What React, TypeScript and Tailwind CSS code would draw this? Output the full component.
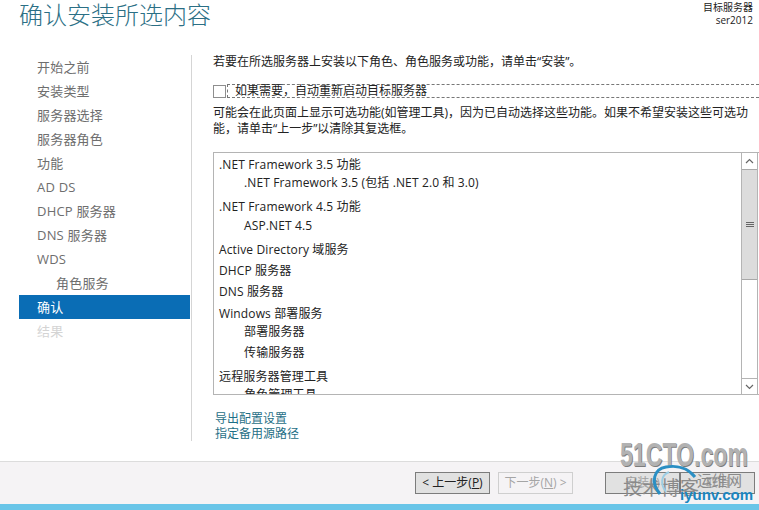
const cjk = "font-['Open_Sans','Noto_Sans_CJK_SC',sans-serif]";

const navItems = [
  { label: "开始之前" },
  { label: "安装类型" },
  { label: "服务器选择" },
  { label: "服务器角色" },
  { label: "功能" },
  { label: "AD DS" },
  { label: "DHCP 服务器" },
  { label: "DNS 服务器" },
  { label: "WDS" },
  { label: "角色服务", sub: true },
  { label: "确认", active: true },
  { label: "结果", disabled: true },
];

const rows = [
  { text: ".NET Framework 3.5 功能", cls: "" },
  { text: ".NET Framework 3.5 (包括 .NET 2.0 和 3.0)", cls: "pl-[25px]" },
  { text: ".NET Framework 4.5 功能", cls: "mt-[6px]" },
  { text: "ASP.NET 4.5", cls: "mt-[1px] pl-[25px]" },
  { text: "Active Directory 域服务", cls: "mt-[6px]" },
  { text: "DHCP 服务器", cls: "mt-[3px]" },
  { text: "DNS 服务器", cls: "mt-[3px]" },
  { text: "Windows 部署服务", cls: "mt-[4px]" },
  { text: "部署服务器", cls: "pl-[25px]" },
  { text: "传输服务器", cls: "mt-[3px] pl-[25px]" },
  { text: "远程服务器管理工具", cls: "mt-[6px]" },
  { text: "角色管理工具", cls: "pl-[25px]" },
];

function Watermark() {
  return (
    <div className="absolute left-[620px] top-[442px] h-[68px] w-[139px] overflow-hidden">
      <div className="absolute left-0 top-[-2px] origin-left whitespace-nowrap font-['Liberation_Sans',sans-serif] text-[33px] font-bold leading-[30px] text-[#b2b2b2] [text-shadow:1px_1px_0_#7c7c7c] [transform:scaleX(0.7)]">
        51CTO.com
      </div>
      <div className="absolute left-[3px] top-[33px] whitespace-nowrap font-['Noto_Sans_CJK_SC',sans-serif] text-[19px] leading-[24px] text-[#8a8a8a]">
        技术博客
      </div>
      <div className="absolute left-[77px] top-[28px] whitespace-nowrap font-['Noto_Sans_CJK_SC',sans-serif] text-[15px] leading-[20px] text-[#8a8a8a]">
        运维网
      </div>
      <svg className="absolute left-0 top-0" width="139" height="68" viewBox="0 0 139 68" fill="none">
        <path d="M40 52C30 40 34 27 46 25c11-2 22 1 29 10" stroke="#2a8fc4" strokeWidth="3" />
        <path d="M46 50c-6-8-5-17 3-20" stroke="#9ccde4" strokeWidth="2" />
      </svg>
      <div className="absolute left-[60px] top-[43px] whitespace-nowrap font-['Liberation_Sans',sans-serif] text-[15px] font-bold leading-[20px] text-[#1a86c0]">
        iyunv.com
      </div>
    </div>
  );
}

export default function App() {
  return (
    <div className={`relative flex h-[510px] w-[759px] flex-col overflow-hidden bg-white text-[12px] text-[#222] ${cjk}`}>
      {/* title */}
      <div className="flex h-[55px] justify-between pl-[19px] pr-[6px]">
        <h1 className="text-[24px] font-light leading-[30px] text-[#2b6f85]">确认安装所选内容</h1>
        <div className="pt-[1px] text-right text-[10px] leading-[13px]">
          <div>目标服务器</div>
          <div>ser2012</div>
        </div>
      </div>

      <div className="flex h-[386px]">
        {/* nav */}
        <div className="ml-[19px] w-[172px] pr-[1px] pt-[1px]">
          {navItems.map((item) => (
            <div
              key={item.label}
              className={`flex items-center text-[13px] tracking-[0.2px] ${item.sub ? "h-[23px] pl-[37px]" : "h-[24px] pl-[18px]"} ${
                item.active ? "bg-[#0a6db5] pt-[2px] text-white" : item.disabled ? "pt-[2px] text-[#d4d4d4]" : "text-[#6e6e6e]"
              }`}
            >
              {item.label}
            </div>
          ))}
        </div>

        {/* content */}
        <div className="flex-1 border-l border-[#d5d5d5] pl-[21px]">
          <p className="h-[29px] leading-[14px]">若要在所选服务器上安装以下角色、角色服务或功能，请单击“安装”。</p>
          <div className="flex h-[14px] items-center">
            <div className="h-[13px] w-[13px] shrink-0 border border-[#8e8e8e]" />
            <div className="ml-[1px] flex h-[14px] flex-1 items-center border border-r-0 border-dashed border-[#777] pl-[7px] leading-none">
              如果需要，自动重新启动目标服务器
            </div>
          </div>
          <p className="mt-[7px] h-[47px] w-[540px] leading-[16px]">
            可能会在此页面上显示可选功能(如管理工具)，因为已自动选择这些功能。如果不希望安装这些可选功能，请单击“上一步”以清除其复选框。
          </p>

          <div className="flex h-[243px] border border-r-0 border-[#b4b4b4]">
            <div className="flex-1 overflow-hidden pl-[5px] pt-[3px] tracking-[0.13px]">
              {rows.map((row) => (
                <div key={row.text} className={`flex h-[18px] items-center whitespace-nowrap ${row.cls}`}>
                  {row.text}
                </div>
              ))}
            </div>
            <div className="mr-[1px] flex w-[17px] flex-col border-x border-[#b4b4b4]">
              <div className="flex h-[16px] items-center justify-center">
                <svg width="9" height="6" viewBox="0 0 9 6" fill="none">
                  <path d="M1 5l3.5-3.5L8 5" stroke="#666" strokeWidth="1.2" />
                </svg>
              </div>
              <div className="flex h-[111px] items-center justify-center border-y border-[#a8a8a8] bg-[#dcdcdc]">
                <div className="flex w-[8px] flex-col gap-[1px]">
                  <div className="h-[1px] bg-[#666]" />
                  <div className="h-[1px] bg-[#666]" />
                  <div className="h-[1px] bg-[#666]" />
                </div>
              </div>
              <div className="flex-1 bg-white" />
              <div className="flex h-[16px] items-center justify-center border-t border-[#b4b4b4]">
                <svg width="9" height="6" viewBox="0 0 9 6" fill="none">
                  <path d="M1 1l3.5 3.5L8 1" stroke="#666" strokeWidth="1.2" />
                </svg>
              </div>
            </div>
          </div>

          <div className="mt-[16px] pl-[2px] leading-[15px] text-[#1f6f86]">
            <div>导出配置设置</div>
            <div>指定备用源路径</div>
          </div>
        </div>
      </div>

      {/* footer */}
      <div className="mt-[20px] flex h-[43px] items-start border-t border-[#dcdcdc] bg-[#f5f3f5] pl-[415px] pt-[10px]">
        <button className="h-[22px] w-[75px] border border-[#7c7c7c] bg-[#e1e1e1] text-[12px] leading-none">&lt; 上一步(<u>P</u>)</button>
        <button className="ml-[8px] h-[22px] w-[75px] border border-[#cfcfcf] bg-[#f5f3f5] text-[12px] leading-none text-[#a5a5a5]">下一步(<u>N</u>) &gt;</button>
        <button className="ml-[32px] h-[22px] w-[75px] shrink-0 border border-[#7c7c7c] bg-[#e1e1e1] text-[12px] leading-none text-[#a0a0a0]">安装(I)</button>
        <button className="h-[22px] w-[75px] shrink-0 border border-[#7c7c7c] bg-[#e1e1e1] text-[12px] leading-none text-[#a0a0a0]">取消</button>
      </div>
      <div className="h-[6px] bg-[#69c5e8]" />

      <Watermark />
    </div>
  );
}
